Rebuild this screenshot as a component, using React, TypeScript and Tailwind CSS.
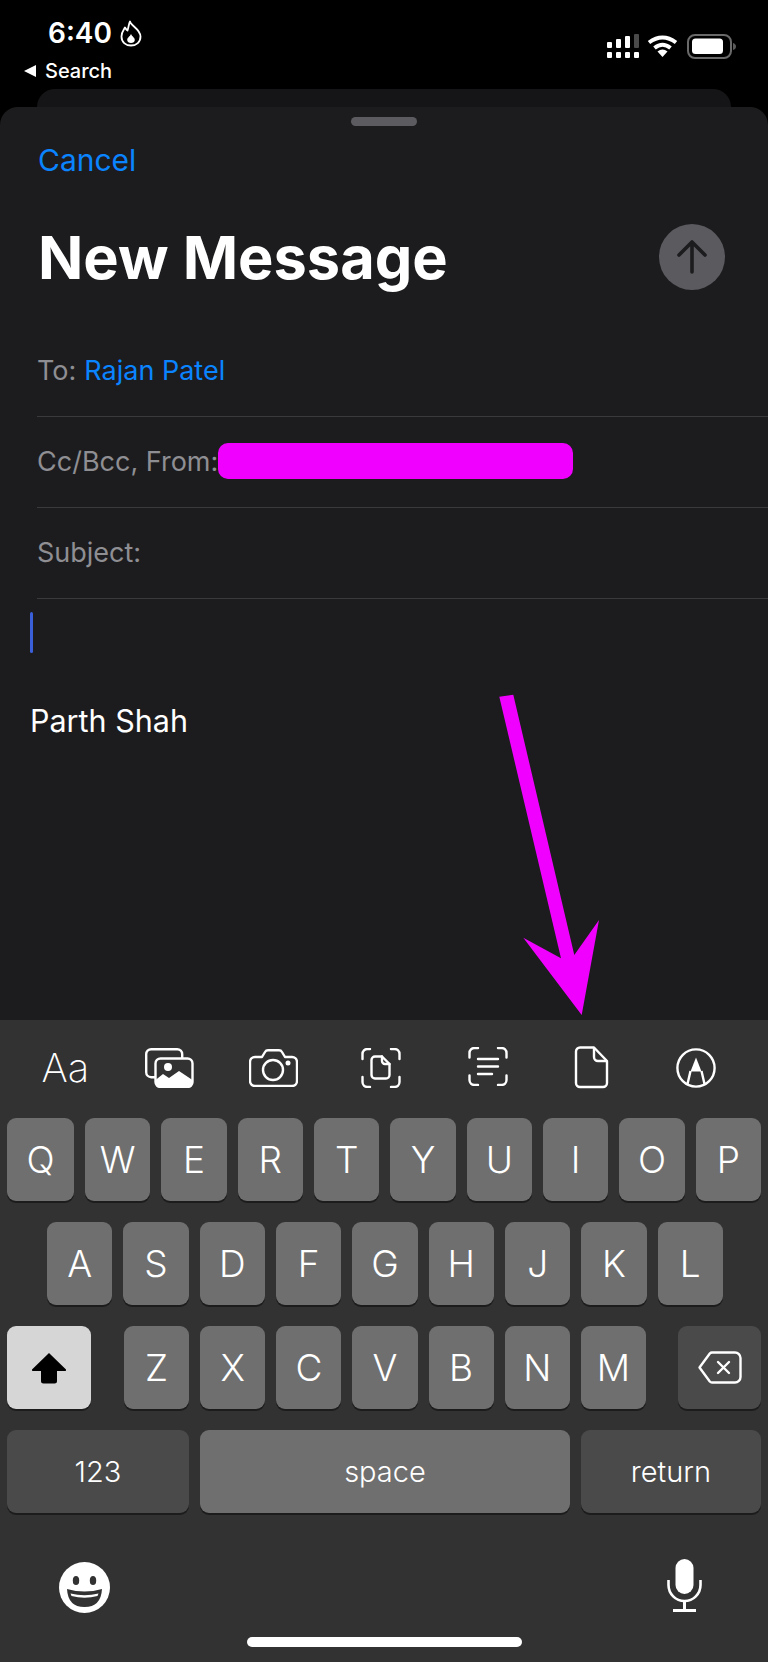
const Key = ({ label, className = "" }: { label: string; className?: string }) => (
  <div className={`flex h-[83px] flex-1 items-center justify-center rounded-[9px] bg-[#6f6f6f] text-[37px] font-light leading-none text-white shadow-[0_2px_0_#1c1c1c] ${className}`}>
    {label}
  </div>
);

const StatusIcons = () => (
  <svg width="132" height="26" viewBox="0 0 132 26" className="block">
    <g fill="#fff">
      <rect x="2" y="8" width="5" height="6" rx="1" />
      <rect x="11" y="5" width="5" height="9" rx="1" />
      <rect x="20" y="2" width="5" height="12" rx="1" />
      <rect x="29" y="0" width="5" height="14" rx="1" fill="#4a4a4a" />
      <rect x="2" y="18" width="5" height="6" rx="1" />
      <rect x="11" y="18" width="5" height="6" rx="1" />
      <rect x="20" y="18" width="5" height="6" rx="1" />
      <rect x="29" y="18" width="5" height="6" rx="1" />
    </g>
    <g fill="none" stroke="#fff" strokeWidth="4" strokeLinecap="butt">
      <path d="M44 8.5 Q57.5 -1.5 71 8.5" />
      <path d="M49.5 14 Q57.5 7.5 65.5 14" />
    </g>
    <path d="M57.5 23 L52.5 17.5 Q57.5 13.5 62.5 17.5 Z" fill="#fff" />
    <rect x="83" y="1" width="43" height="23" rx="7" fill="none" stroke="#6a6a6a" strokeWidth="2" />
    <rect x="87" y="4.5" width="31" height="15.5" rx="3.5" fill="#fff" />
    <path d="M128 9 Q131 10 131 12.5 Q131 15 128 16 Z" fill="#5a5a5a" />
  </svg>
);

const Flame = () => (
  <svg width="22" height="27" viewBox="0 0 22 27" className="block">
    <path d="M10 1.5 C11 6 20.5 9 20.5 16.5 C20.5 22 16.5 25.5 11 25.5 C5.5 25.5 1.5 22 1.5 16.5 C1.5 12 4 9.5 5 7.5 C6 9 6.5 10 7.5 10.5 C8.5 8 8.5 4.5 10 1.5 Z" fill="none" stroke="#fff" strokeWidth="1.8" strokeLinejoin="round" />
    <path d="M11 14 C12 16.5 14.8 17.5 14.8 20 C14.8 22 13 23 11 23 C9 23 7.2 22 7.2 20 C7.2 17.5 10 16.5 11 14 Z" fill="#fff" />
  </svg>
);

const iconCell = "flex h-[48px] w-[105px] items-center justify-center";

const Toolbar = () => (
  <div className="flex h-[98px] items-start pl-[13px] pt-[24px] text-white">
    <div className={`${iconCell} text-[40px] font-[250] leading-none`}>Aa</div>
    <div className={iconCell}>
      <svg width="49" height="40" viewBox="0 0 49 40" fill="none" stroke="#fff" strokeWidth="2.4" className="-ml-[2px]">
        <rect x="1.2" y="1.2" width="36" height="28" rx="5" />
        <rect x="10.5" y="10.5" width="37" height="28.5" rx="5" fill="#323232" />
        <circle cx="23" cy="19" r="4" fill="#fff" stroke="none" />
        <path d="M10.5 32 L18 26 L24 30 L34 23 L47.5 32 V34 a5 5 0 0 1 -5 5 H15.5 a5 5 0 0 1 -5 -5 Z" fill="#fff" stroke="none" />
      </svg>
    </div>
    <div className={iconCell}>
      <svg width="49" height="38" viewBox="0 0 49 38" fill="none" stroke="#fff" strokeWidth="2.4" strokeLinejoin="round" className="-ml-[4px]">
        <path d="M6 8 H13 L16 3 Q17 1.2 19 1.2 H30 Q32 1.2 33 3 L36 8 H43 a5 5 0 0 1 5 5 V32 a5 5 0 0 1 -5 5 H6 a5 5 0 0 1 -5 -5 V13 a5 5 0 0 1 5 -5 Z" />
        <circle cx="24" cy="21" r="10" />
        <circle cx="39" cy="14" r="2.5" fill="#fff" stroke="none" />
      </svg>
    </div>
    <div className={iconCell}>
      <svg width="40" height="40" viewBox="0 0 40 40" fill="none" stroke="#fff" strokeWidth="2.4" strokeLinecap="round" strokeLinejoin="round">
        <path d="M1.5 11 V6 a5 5 0 0 1 5 -5 H9 M30 1 H33.5 a5 5 0 0 1 5 5 V11 M38.5 29 V34 a5 5 0 0 1 -5 5 H30 M9 39 H6.5 a5 5 0 0 1 -5 -5 V29" />
        <path d="M14 8.5 H21 L28.5 16 V27 a3.5 3.5 0 0 1 -3.5 3.5 H14 a3.5 3.5 0 0 1 -3.5 -3.5 V12 a3.5 3.5 0 0 1 3.5 -3.5 Z" />
        <path d="M21 8.5 V13 a3 3 0 0 0 3 3 H28.5" />
      </svg>
    </div>
    <div className={iconCell}>
      <svg width="40" height="39" viewBox="0 0 40 39" fill="none" stroke="#fff" strokeWidth="2.4" strokeLinecap="round" className="-mt-[3px] ml-[4px]">
        <path d="M1.5 10.5 V6 a5 5 0 0 1 5 -5 H10 M30 1 H33.5 a5 5 0 0 1 5 5 V10.5 M38.5 28.5 V33 a5 5 0 0 1 -5 5 H30 M10 38 H6.5 a5 5 0 0 1 -5 -5 V28.5" />
        <path d="M10 12 H30 M10 19.5 H30 M10 27 H24" />
      </svg>
    </div>
    <div className={iconCell}>
      <svg width="35" height="43" viewBox="0 0 35 43" fill="none" stroke="#fff" strokeWidth="2.4" strokeLinejoin="round" className="-mt-[1px] ml-[2px]">
        <path d="M6 1.5 H20 L33 15 V37 a4 4 0 0 1 -4 4 H6 a4 4 0 0 1 -4 -4 V5.5 a4 4 0 0 1 4 -4 Z" />
        <path d="M20 2 V11 a4 4 0 0 0 4 4 H33" />
      </svg>
    </div>
    <div className={iconCell}>
      <svg width="40" height="40" viewBox="0 0 40 40" fill="none" stroke="#fff" strokeWidth="2.4">
        <circle cx="20" cy="20" r="18.6" />
        <path d="M20 9.5 L25.5 23.5 H14.5 Z" fill="#fff" stroke="none" />
        <path d="M14.5 23 L11.5 36 M25.5 23 L28.5 36" />
      </svg>
    </div>
  </div>
);

const Keyboard = () => (
  <div className="h-[642px] bg-[#323232]">
    <Toolbar />
    <div className="flex flex-col gap-[21px] px-[7px]">
      <div className="flex gap-[11px]">
        <Key label="Q" className="max-w-[67px] min-w-[67px]" />
        {"WERTYUIOP".split("").map((k) => (
          <Key key={k} label={k} />
        ))}
      </div>
      <div className="flex gap-[11px] pl-[40px] pr-[38px]">
        {"ASDFGHJKL".split("").map((k) => (
          <Key key={k} label={k} />
        ))}
      </div>
      <div className="flex">
        <div className="flex h-[83px] w-[84px] items-center justify-center rounded-[9px] bg-[#d6d6d6] shadow-[0_2px_0_#1c1c1c]">
          <svg width="36" height="32" viewBox="0 0 36 32">
            <path d="M18 1 L35 17.5 Q35.5 19 34 19 H26 V29 Q26 31.5 23.5 31.5 H12.5 Q10 31.5 10 29 V19 H2 Q0.5 19 1 17.5 Z" fill="#000" />
          </svg>
        </div>
        <div className="ml-[33px] mr-[32px] flex flex-1 gap-[11px]">
          {"ZXCVBNM".split("").map((k) => (
            <Key key={k} label={k} />
          ))}
        </div>
        <div className="flex h-[83px] w-[83px] items-center justify-center rounded-[9px] bg-[#4a4a4a] shadow-[0_2px_0_#1c1c1c]">
          <svg width="44" height="33" viewBox="0 0 44 33" fill="none" stroke="#fff" strokeWidth="2.4" strokeLinejoin="round" strokeLinecap="round">
            <path d="M14 1.5 H37 a5.5 5.5 0 0 1 5.5 5.5 V26 a5.5 5.5 0 0 1 -5.5 5.5 H14 a3 3 0 0 1 -2.2 -1 L1.5 16.5 L11.8 2.5 a3 3 0 0 1 2.2 -1 Z" />
            <path d="M20 11 L31 22 M31 11 L20 22" />
          </svg>
        </div>
      </div>
      <div className="flex gap-[11px] text-[29px] font-light leading-none text-white">
        <div className="flex h-[83px] w-[182px] items-center justify-center rounded-[9px] bg-[#4a4a4a] shadow-[0_2px_0_#1c1c1c]">123</div>
        <div className="flex h-[83px] flex-1 items-center justify-center rounded-[9px] bg-[#6f6f6f] shadow-[0_2px_0_#1c1c1c]">space</div>
        <div className="flex h-[83px] w-[180px] items-center justify-center rounded-[9px] bg-[#4a4a4a] shadow-[0_2px_0_#1c1c1c]">return</div>
      </div>
    </div>
    <div className="mt-[48px] flex items-start justify-between pl-[59px] pr-[66px]">
      <svg width="51" height="51" viewBox="0 0 51 51" className="mt-[1px]">
        <circle cx="25.5" cy="25.5" r="25.5" fill="#fff" />
        <ellipse cx="17" cy="18.5" rx="3.2" ry="4.6" fill="#323232" />
        <ellipse cx="34" cy="18.5" rx="3.2" ry="4.6" fill="#323232" />
        <path d="M8 27 Q25.5 32 43 27 Q42 45 25.5 45 Q9 45 8 27 Z" fill="#323232" />
        <path d="M11.5 31.5 Q25.5 35 39.5 31.5 L38.5 34 Q25.5 37.5 12.5 34 Z" fill="#fff" />
      </svg>
      <svg width="35" height="53" viewBox="0 0 35 53" fill="none" stroke="#fff" strokeWidth="2.6" className="-mt-[2px]">
        <rect x="8.5" y="0" width="18" height="35" rx="9" fill="#fff" stroke="none" />
        <path d="M1.5 21 V26 a16 16 0 0 0 32 0 V21" />
        <path d="M17.5 42 V51 M6 51.5 H29" strokeWidth="3" />
      </svg>
    </div>
    <div className="mx-auto mt-[24px] h-[10px] w-[275px] rounded-full bg-white" />
  </div>
);

const Row = ({ children }: { children: React.ReactNode }) => (
  <div className="flex h-[91px] items-center gap-[8px] border-b border-[#3a3a3c] pb-[2px] text-[27px] leading-none text-[#8e8e93]">
    {children}
  </div>
);

export default function App() {
  return (
    <div className="relative flex h-[1662px] w-[768px] flex-col overflow-hidden bg-black [font-family:Inter,sans-serif]">
      <header className="relative flex h-[89px] justify-between pl-[24px] pr-[31px] text-white">
        <div>
          <div className="flex items-center gap-[8px] pl-[24px] pt-[19px]">
            <span className="text-[28px] font-semibold leading-[28px]">6:40</span>
            <Flame />
          </div>
          <div className="mt-[14px] flex items-center gap-[9px]">
            <span className="h-0 w-0 border-y-[6px] border-r-[12px] border-y-transparent border-r-white" />
            <span className="text-[20px] font-medium leading-[20px]">Search</span>
          </div>
        </div>
        <div className="pt-[34px]">
          <StatusIcons />
        </div>
      </header>
      <div className="mx-[37px] h-[18px] rounded-t-[18px] bg-[#151517]" />
      <main className="flex h-[913px] flex-col rounded-t-[18px] bg-[#1c1c1e]">
        <div className="mx-auto mt-[10px] h-[9px] w-[66px] rounded-full bg-[#5c5c60]" />
        <div className="mt-[17px] pl-[38px] text-[30px] leading-[34px] text-[#0a84ff]">Cancel</div>
        <div className="mt-[47px] flex items-center justify-between pl-[38px] pr-[43px]">
          <h1 className="text-[59.5px] font-bold leading-[66px] text-white">New Message</h1>
          <div className="flex h-[66px] w-[66px] items-center justify-center rounded-full bg-[#5b5a5f]">
            <svg width="30" height="34" viewBox="0 0 30 34" fill="none" stroke="#1c1c1e" strokeWidth="3.6" strokeLinecap="round" strokeLinejoin="round">
              <path d="M15 32 V3 M2 15 L15 2 L28 15" />
            </svg>
          </div>
        </div>
        <div className="mt-[36px] pl-[37px]">
          <Row>
            <span>To:</span>
            <span className="text-[#0a84ff]">Rajan Patel</span>
          </Row>
          <Row>
            <span>Cc/Bcc, From:</span>
            <span className="-ml-[8px] h-[36px] w-[355px] rounded-[10px] bg-[#f000ff]" />
          </Row>
          <Row>
            <span>Subject:</span>
          </Row>
        </div>
        <div className="ml-[30px] mt-[13px] h-[41px] w-[3px] rounded-full bg-[#3a5fd9]" />
        <div className="ml-[30px] mt-[50px] text-[30.5px] leading-[36px] text-white">Parth Shah</div>
      </main>
      <Keyboard />
      <svg width="768" height="1662" viewBox="0 0 768 1662" className="pointer-events-none absolute left-0 top-0">
        <polygon points="499.3,696.7 513.3,694.7 574.3,955 599,920 581.7,1015 523.3,937.7 561,958.3" fill="#f000ff" />
      </svg>
    </div>
  );
}
